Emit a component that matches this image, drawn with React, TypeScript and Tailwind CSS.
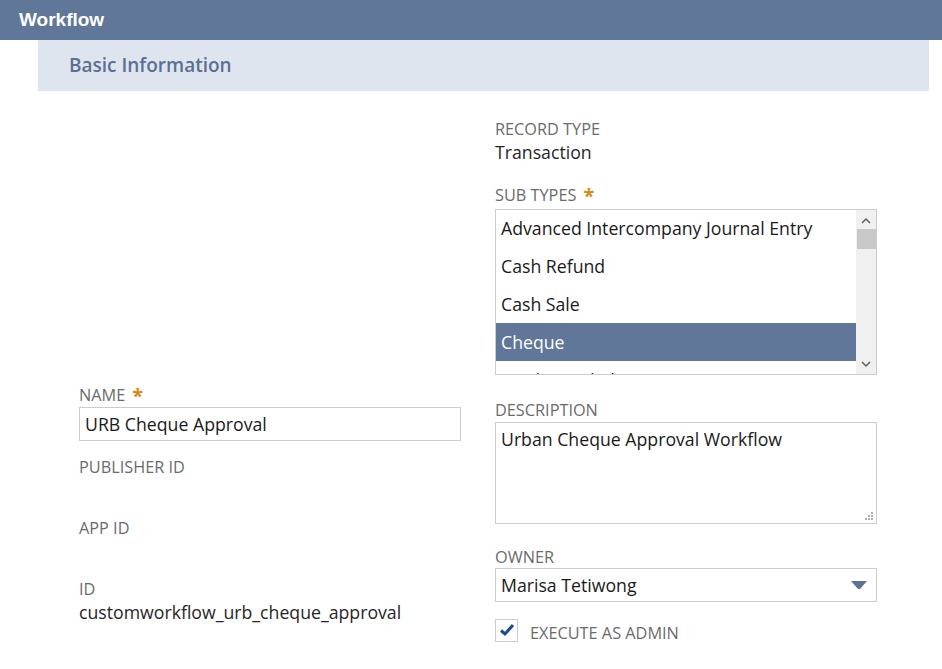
import { useState } from "react";

const SUB_TYPES = [
  "Advanced Intercompany Journal Entry",
  "Cash Refund",
  "Cash Sale",
  "Cheque",
  "Credit Card Charge",
];

function Label({ text, required }: { text: string; required?: boolean }) {
  return (
    <div className="flex h-[19px] items-center text-[16.3px] uppercase leading-[19px] text-[#6b6b6b]">
      {text}
      {required && <span className="ml-[7px] text-[20px] font-bold leading-none text-[#d38a17]">*</span>}
    </div>
  );
}

function SubTypeList() {
  const [selected, setSelected] = useState("Cheque");
  return (
    <div className="mt-[4px] flex h-[166px] overflow-hidden border border-[#cccccc] bg-white">
      <div className="-mt-[1px] flex-1 overflow-hidden">
        {SUB_TYPES.map((t) => (
          <div
            key={t}
            onClick={() => setSelected(t)}
            className={
              "flex h-[38px] shrink-0 items-center px-[5px] text-[17.7px] " +
              (t === selected ? "bg-[#607799] text-white" : "text-[#1a1a1a]")
            }
          >
            {t}
          </div>
        ))}
      </div>
      {/* scrollbar */}
      <div className="flex w-[20px] flex-col items-center bg-[#f0f0f0]">
        <svg width="10" height="8" viewBox="0 0 10 8" className="mt-[7px]">
          <path d="M1 6 L5 2 L9 6" fill="none" stroke="#606060" strokeWidth="1.5" />
        </svg>
        <div className="mt-[4px] h-[20px] w-[19px] bg-[#c8c8c8]" />
        <div className="flex-1" />
        <svg width="10" height="8" viewBox="0 0 10 8" className="mb-[6px]">
          <path d="M1 2 L5 6 L9 2" fill="none" stroke="#606060" strokeWidth="1.5" />
        </svg>
      </div>
    </div>
  );
}

export default function App() {
  return (
    <div className="h-[669px] w-[942px] overflow-hidden bg-white font-['Open_Sans',sans-serif] text-[#262626]">
      <div className="flex h-[40px] items-center bg-[#607799] pl-[19px] pt-[1px] font-['Liberation_Sans',Arial,sans-serif] text-[19px] font-bold text-white">
        Workflow
      </div>
      <div className="ml-[38px] mr-[13px] flex h-[51px] items-center bg-[#dfe5ef] pl-[31px] text-[19px] font-semibold text-[#5b6f91]">
        Basic Information
      </div>

      <div className="flex gap-[34px] pl-[79px]">
        {/* left column */}
        <div className="flex w-[382px] flex-col pt-[295px]">
          <Label text="Name" required />
          <div className="mt-[2px] flex h-[34px] items-center border border-[#cccccc] px-[5px] text-[17.7px] text-[#1a1a1a]">
            URB Cheque Approval
          </div>
          <div className="mt-[17px] h-[61px]">
            <Label text="Publisher ID" />
          </div>
          <div className="h-[61px]">
            <Label text="App ID" />
          </div>
          <Label text="ID" />
          <div className="mt-[1px] text-[17.7px] leading-[24px]">customworkflow_urb_cheque_approval</div>
        </div>

        {/* right column */}
        <div className="flex w-[382px] flex-col pt-[29px]">
          <Label text="Record Type" />
          <div className="mt-[1px] text-[17.7px] leading-[24px]">Transaction</div>
          <div className="mt-[22px]">
            <Label text="Sub Types" required />
          </div>
          <SubTypeList />

          <div className="mt-[26px]">
            <Label text="Description" />
          </div>
          <div className="relative mt-[2px] h-[102px] border border-[#cccccc] px-[5px] pt-[4px] text-[17.7px] leading-[24px] text-[#1a1a1a]">
            Urban Cheque Approval Workflow
            <svg width="10" height="10" viewBox="0 0 10 10" className="absolute bottom-[2px] right-[2px]">
              <g fill="#b0b0b0">
                <rect x="7" y="1" width="2" height="2" />
                <rect x="4" y="4" width="2" height="2" />
                <rect x="7" y="4" width="2" height="2" />
                <rect x="1" y="7" width="2" height="2" />
                <rect x="4" y="7" width="2" height="2" />
                <rect x="7" y="7" width="2" height="2" />
              </g>
            </svg>
          </div>

          <div className="mt-[24px]">
            <Label text="Owner" />
          </div>
          <div className="mt-[1px] flex h-[34px] items-center justify-between border border-[#cccccc] pl-[5px] pr-[8px] text-[17.7px] text-[#1a1a1a]">
            Marisa Tetiwong
            <svg width="18" height="10" viewBox="0 0 18 10">
              <path d="M1 1 H17 L10 9 H8 Z" fill="#5a7397" />
            </svg>
          </div>

          <div className="mt-[13px] flex items-center">
            <div className="flex h-[23px] w-[23px] items-center justify-center border border-[#cccccc] bg-white">
              <svg width="16" height="14" viewBox="0 0 16 14">
                <path d="M2 7.5 L6 11 L14 2" fill="none" stroke="#1d4c8c" strokeWidth="3" />
              </svg>
            </div>
            <span className="ml-[12px] mt-[6px] text-[16.3px] uppercase text-[#6b6b6b]">Execute as admin</span>
          </div>
        </div>
      </div>
    </div>
  );
}
